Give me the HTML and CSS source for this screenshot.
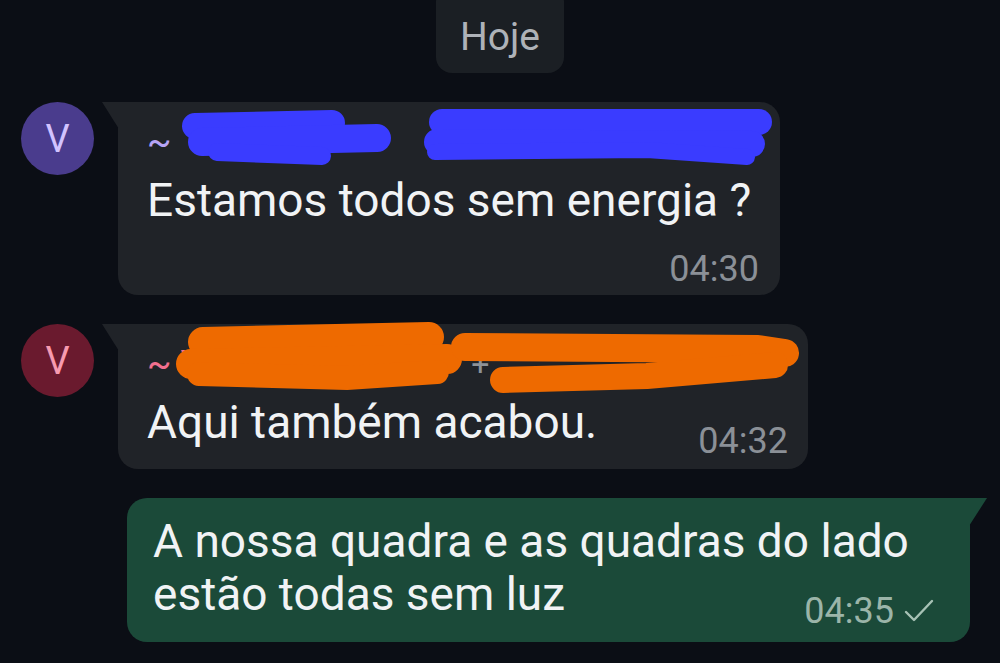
FILE: index.html
```html
<!DOCTYPE html>
<html lang="pt">
<head>
    <meta charset="UTF-8" />
    <meta name="viewport" content="width=device-width, initial-scale=1.0" />
    <title>Conversa</title>
    <link rel="stylesheet" href="styles.css">
</head>
<body>
    <div class="chat">
        <div class="day-chip">Hoje</div>

        <div class="row incoming">
            <div class="avatar avatar-purple">V</div>
            <div class="bubble bubble-in bubble-one">
                <div class="sender">
                    <span class="tilde tilde-purple">~</span>
                    <svg class="redact" width="660" height="70" viewBox="0 0 660 70">
                        <g stroke="#3a3cff" stroke-linecap="round" fill="none">
                            <path d="M48 20 L185 17" stroke-width="26" />
                            <path d="M55 36 L230 32" stroke-width="28" />
                            <path d="M70 46 L175 50" stroke-width="18" />
                            <path d="M295 16 L612 16" stroke-width="26" />
                            <path d="M290 36 L605 38" stroke-width="26" />
                            <path d="M288 46 L500 44 L600 51" stroke-width="16" />
                        </g>
                    </svg>
                </div>
                <div class="msg-text">Estamos todos sem energia ?</div>
                <div class="meta meta-line">04:30</div>
            </div>
        </div>

        <div class="row incoming">
            <div class="avatar avatar-red">V</div>
            <div class="bubble bubble-in bubble-two">
                <div class="sender">
                    <span class="tilde tilde-pink">~ V</span>
                    <span class="plus">+</span>
                    <span class="fragment">'4</span>
                    <svg class="redact" width="680" height="70" viewBox="0 0 680 70">
                        <g stroke="#ee6a00" stroke-linecap="round" fill="none">
                            <path d="M56 14 L282 9" stroke-width="30" />
                            <path d="M44 36 L300 31" stroke-width="30" />
                            <path d="M52 46 L200 50 L290 44" stroke-width="24" />
                            <path d="M318 19 L610 21 L638 25" stroke-width="28" />
                            <path d="M356 52 L500 48 L628 37" stroke-width="26" />
                        </g>
                    </svg>
                </div>
                <div class="msg-row">
                    <div class="msg-text msg-pad">Aqui também acabou.</div>
                    <div class="meta">04:32</div>
                </div>
            </div>
        </div>

        <div class="row outgoing">
            <div class="bubble bubble-out">
                <div class="msg-text msg-out">A nossa quadra e as quadras do lado<br>estão todas sem luz</div>
                <div class="meta meta-out">
                    04:35
                    <svg class="tick" width="32" height="26" viewBox="0 0 32 26">
                        <path d="M3 14 L11 22 L29 3" stroke="#a7c2b5" stroke-width="2.4" fill="none" stroke-linecap="round" stroke-linejoin="round" />
                    </svg>
                </div>
            </div>
        </div>
    </div>
</body>
</html>
```

FILE: styles.css
```css
* {
    box-sizing: border-box;
}

body {
    font-family: "Roboto", "Noto Sans", sans-serif;
    background-color: #0b0e15;
    margin: 0;
    padding: 0;
    color: #eef0f2;
}

.chat {
    display: flex;
    flex-direction: column;
    height: 663px;
    overflow: hidden;
}

.day-chip {
    align-self: center;
    margin-top: -14px;
    padding: 28px 24px 13px;
    background-color: #1b1f24;
    border-radius: 16px;
    color: #aeb2b8;
    font-size: 39px;
    line-height: 46px;
}

.row {
    display: flex;
    align-items: flex-start;
}

.incoming {
    padding-left: 21px;
    gap: 24px;
    margin-top: 29px;
}

.outgoing {
    justify-content: flex-end;
    padding-right: 30px;
    margin-top: 29px;
}

.avatar {
    width: 73px;
    height: 73px;
    border-radius: 50%;
    flex-shrink: 0;
    display: flex;
    align-items: center;
    justify-content: center;
    font-size: 38px;
}

.avatar-purple {
    background-color: #4a3c8d;
    color: #d2c3ff;
}

.avatar-red {
    background-color: #6a1a2e;
    color: #f79bb0;
}

.bubble {
    position: relative;
    border-radius: 20px;
}

.bubble-in {
    background-color: #202328;
    border-top-left-radius: 0;
    padding: 8px 21px 5px 29px;
}

.bubble-in::before {
    content: "";
    position: absolute;
    top: 0;
    left: -16px;
    width: 17px;
    height: 27px;
    background-color: #202328;
    clip-path: polygon(0 0, 100% 0, 100% 100%);
}

.bubble-one {
    width: 662px;
}

.bubble-two {
    width: 690px;
    padding-bottom: 7px;
    padding-right: 20px;
}

.sender {
    display: flex;
    align-items: center;
    height: 63px;
    position: relative;
}

.tilde {
    font-size: 36px;
}

.tilde-purple {
    color: #b7a4f5;
}

.tilde-pink {
    color: #f2708f;
}

.plus {
    color: #8d9298;
    font-size: 32px;
    margin-left: 268px;
}

.fragment {
    color: #8d9298;
    font-size: 32px;
    margin-left: 236px;
}

.redact {
    position: absolute;
    left: 0;
    top: -4px;
    overflow: visible;
}

.msg-text {
    font-size: 46px;
    line-height: 54px;
    color: #f1f3f5;
}

.msg-pad {
    padding-bottom: 13px;
}

.meta {
    color: #8b9097;
    font-size: 36px;
    line-height: 42px;
    white-space: nowrap;
}

.meta-line {
    text-align: right;
    margin-top: 21px;
}

.msg-row {
    display: flex;
    align-items: flex-end;
    justify-content: space-between;
    gap: 20px;
}

.bubble-out {
    background-color: #1b4a39;
    border-top-right-radius: 0;
    width: 843px;
    padding: 17px 35px 10px 26px;
}

.bubble-out::before {
    content: "";
    position: absolute;
    top: 0;
    right: -17px;
    width: 18px;
    height: 28px;
    background-color: #1b4a39;
    clip-path: polygon(0 0, 100% 0, 0 100%);
}

.msg-out {
    line-height: 53px;
}

.meta-out {
    color: #9bb5a9;
    display: flex;
    align-items: center;
    justify-content: flex-end;
    gap: 9px;
    margin-top: -31px;
}
```
